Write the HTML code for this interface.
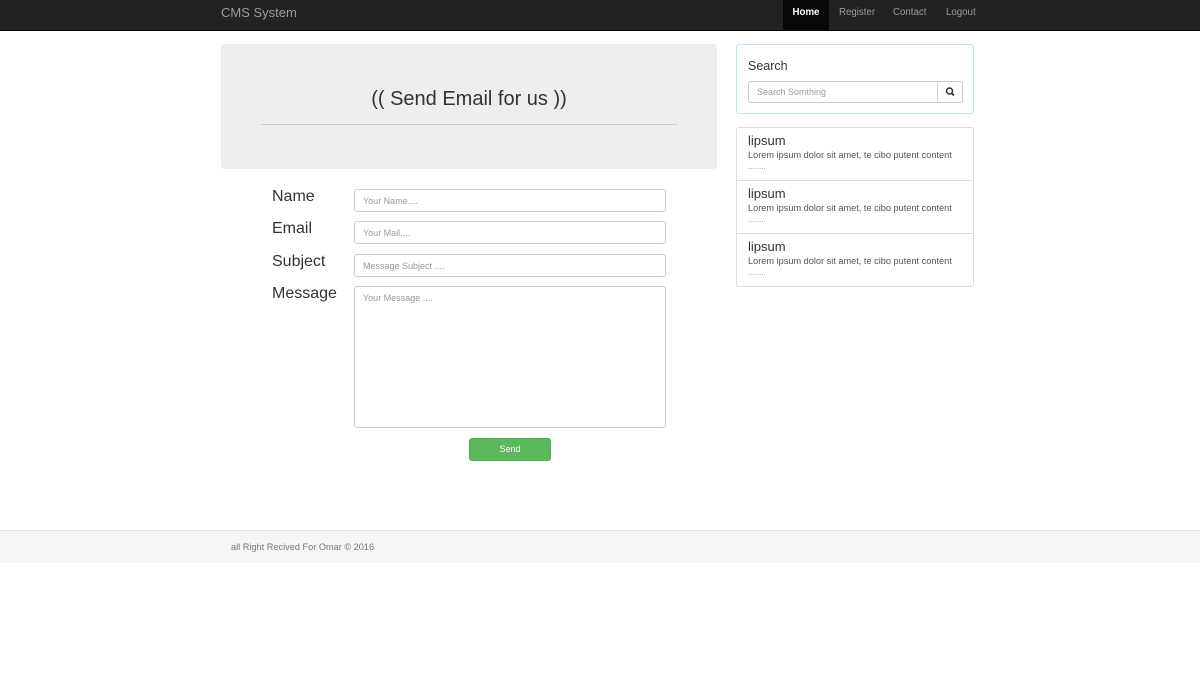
<!DOCTYPE html>
<html><head><meta charset="utf-8"><style>
*{box-sizing:border-box}
body{margin:0;width:1200px;height:684px;background:#fff;font-family:"Liberation Sans",Arial,sans-serif;color:#333;position:relative;overflow:hidden}
.nav{position:absolute;left:0;top:0;width:1200px;height:31px;background:#222;border-bottom:1px solid #080808}
.brand{position:absolute;left:221px;top:5px;font-size:13px;color:#9d9d9d}
.nav a{position:absolute;top:0;height:30px;line-height:25px;font-size:9.7px;color:#9d9d9d}
.jumbo{position:absolute;left:221px;top:44px;width:496px;height:125px;background:#eee;border-radius:4px}
.jumbo h2{margin:0;position:absolute;top:44px;width:100%;text-align:center;font-weight:normal;font-size:20px;color:#333}
.jumbo hr{position:absolute;left:40px;top:80px;width:416px;margin:0;border:0;border-top:1px solid #ccc}
.lbl{position:absolute;left:272px;font-size:16px;color:#333}
.inp{position:absolute;left:354px;width:312px;height:23px;border:1px solid #ccc;border-radius:3px;font-size:9px;color:#999;padding:6px 8px;line-height:10px}
.btn{position:absolute;left:469px;top:438px;width:82px;height:23px;background:#5cb85c;border:1px solid #4cae4c;border-radius:3px;color:#fff;font-size:9px;text-align:center;line-height:21px}
.search{position:absolute;left:736px;top:44px;width:238px;height:70px;border:1px solid #bce8f1;border-radius:3px}
.list{position:absolute;left:736px;top:127px;width:238px;height:160px;border:1px solid #ddd;border-radius:3px}
.item{height:53px;border-bottom:1px solid #ddd;padding:5px 11px}
.item:last-child{border-bottom:0}
.item b{display:block;font-weight:normal;font-size:13px;color:#333;line-height:15px}
.item span{display:block;font-size:9.2px;color:#555;line-height:12px;margin-top:1px}
.item i{display:block;font-style:normal;font-size:8px;color:#999;line-height:10px;margin-top:1px}
.foot{position:absolute;left:0;top:530px;width:1200px;height:33px;background:#f5f5f5;border-top:1px solid #e5e5e5}
.foot span{position:absolute;left:231px;top:11px;font-size:9.2px;color:#777}
</style></head><body>
<div class="nav">
<div class="brand">CMS System</div>
<a style="left:783px;width:46px;background:#080808;color:#fff;font-weight:bold;text-align:center">Home</a>
<a style="left:839px">Register</a>
<a style="left:893px">Contact</a>
<a style="left:946px">Logout</a>
</div>
<div class="jumbo"><h2>(( Send Email for us ))</h2><hr></div>
<div class="lbl" style="top:188px">Name</div>
<div class="inp" style="top:189px">Your Name....</div>
<div class="lbl" style="top:220px">Email</div>
<div class="inp" style="top:221px">Your Mail....</div>
<div class="lbl" style="top:253px">Subject</div>
<div class="inp" style="top:254px">Message Subject ....</div>
<div class="lbl" style="top:285px">Message</div>
<div class="inp" style="top:286px;height:142px">Your Message ....</div>
<div class="btn">Send</div>
<div class="search">
<div style="position:absolute;left:11px;top:14px;font-size:12.5px;color:#333">Search</div>
<div style="position:absolute;left:11px;top:36px;width:190px;height:22px;border:1px solid #ccc;border-radius:3px 0 0 3px;font-size:9px;color:#999;padding:5px 8px">Search Somthing</div>
<div style="position:absolute;left:200px;top:36px;width:26px;height:22px;border:1px solid #ccc;border-radius:0 3px 3px 0">
<svg width="24" height="20" viewBox="0 0 24 20"><circle cx="11.5" cy="9" r="3" fill="none" stroke="#333" stroke-width="1.5"/><line x1="13.7" y1="11.2" x2="16" y2="13.5" stroke="#333" stroke-width="1.8"/></svg></div>
</div>
<div class="list">
<div class="item"><b>lipsum</b><span>Lorem ipsum dolor sit amet, te cibo putent content</span><i>........</i></div>
<div class="item"><b>lipsum</b><span>Lorem ipsum dolor sit amet, te cibo putent content</span><i>........</i></div>
<div class="item"><b>lipsum</b><span>Lorem ipsum dolor sit amet, te cibo putent content</span><i>........</i></div>
</div>
<div class="foot"><span>all Right Recived For Omar © 2016</span></div>
</body></html>
